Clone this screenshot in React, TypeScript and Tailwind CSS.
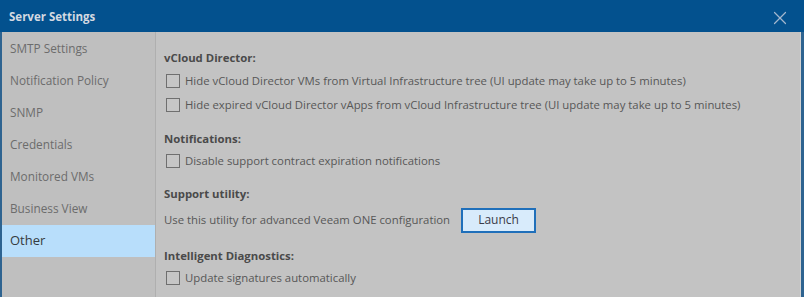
import { X } from "lucide-react";

const NAV = [
  "SMTP Settings",
  "Notification Policy",
  "SNMP",
  "Credentials",
  "Monitored VMs",
  "Business View",
  "Other",
];

function Check({ label, className = "" }: { label: string; className?: string }) {
  return (
    <div className={"flex items-center h-[24px] pl-[2px] " + className}>
      <span className="w-[14px] h-[14px] border border-[#6f6f6f] bg-[#c6c6c6] shrink-0" />
      <span className="ml-[5px] text-[#575757]">{label}</span>
    </div>
  );
}

function Heading({ children }: { children: string }) {
  return <div className="h-[20px] flex items-center font-bold text-[#4a4a4a]">{children}</div>;
}

export default function App() {
  return (
    <div
      className="w-[804px] h-[297px] flex flex-col bg-[#c3c3c3] overflow-hidden"
      style={{ fontFamily: '"Segoe UI", "Open Sans", "Noto Sans", sans-serif' }}
    >
      {/* title bar */}
      <div className="h-[32px] shrink-0 bg-[#03518e] flex items-center justify-between pl-[9px] pr-[13px]">
        <span className="font-bold text-[11.5px] text-[#d3d9e1] pt-[1px]">Server Settings</span>
        <X className="w-[22px] h-[22px] mt-[3px] text-[#a3b7cd]" strokeWidth={1.3} />
      </div>

      <div className="flex-1 flex border-l-2 border-l-[#2e6390] border-r-[3px] border-r-[#2e6390]">
        {/* sidebar */}
        <div className="w-[154px] shrink-0 pt-[1px] bg-[#bfbfbf] border-r border-[#afafaf] flex flex-col text-[11.8px]">
          {NAV.map((n) => (
            <div
              key={n}
              className={
                n === "Other"
                  ? "h-[32px] flex items-center pl-[8px] bg-[#b8defb] text-[#363b40] text-[13px]"
                  : "h-[32px] flex items-center pl-[8px] text-[#6c6c6c]"
              }
            >
              {n}
            </div>
          ))}
        </div>

        {/* content */}
        <div className="flex-1 pl-[8px] pt-[16px] border-r border-[#d2d2d2] text-[11.35px]">
          <Heading>vCloud Director:</Heading>
          <Check
            className="mt-[1px]"
            label="Hide vCloud Director VMs from Virtual Infrastructure tree (UI update may take up to 5 minutes)"
          />
          <Check label="Hide expired vCloud Director vApps from vCloud Infrastructure tree (UI update may take up to 5 minutes)" />

          <div className="mt-[12px]">
            <Heading>Notifications:</Heading>
          </div>
          <Check label="Disable support contract expiration notifications" />

          <div className="mt-[11px]">
            <Heading>Support utility:</Heading>
          </div>
          <div className="mt-[3px] h-[26px] flex items-center">
            <span className="text-[#575757]">Use this utility for advanced Veeam ONE configuration</span>
            <button className="ml-[11px] w-[75px] h-[25px] border-2 border-[#1f6fba] bg-[#d8ebfb] text-[#3a3a48] text-[12px]">
              Launch
            </button>
          </div>

          <div className="mt-[13px]">
            <Heading>Intelligent Diagnostics:</Heading>
          </div>
          <Check label="Update signatures automatically" />
        </div>
      </div>
    </div>
  );
}
